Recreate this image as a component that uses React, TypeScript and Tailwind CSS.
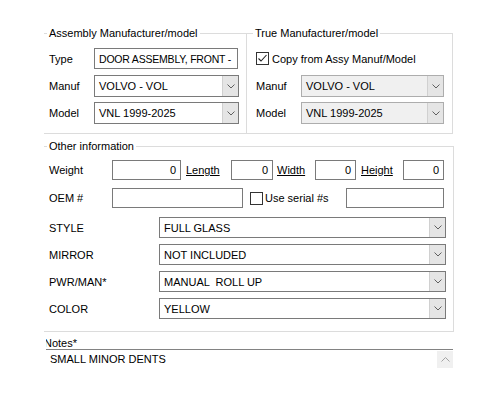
function ChevronDown() {
  return (
    <svg width="8" height="5" viewBox="0 0 8 5" fill="none">
      <path d="M0.5 0.5 L4 4 L7.5 0.5" stroke="#606060" strokeWidth="1" />
    </svg>
  )
}

function ChevronUp() {
  return (
    <svg width="9" height="5" viewBox="0 0 9 5" fill="none">
      <path d="M0.5 4.5 L4.5 0.5 L8.5 4.5" stroke="#a3a3a3" strokeWidth="1" />
    </svg>
  )
}

function Combo({ value, className, disabled }: { value: string; className: string; disabled?: boolean }) {
  return (
    <div className={`flex border ${disabled ? 'bg-[#f0f0f0] border-[#adadad]' : 'bg-white border-[#7a7a7a]'} ${className}`}>
      <div className="flex-1 pl-[4px] flex items-center whitespace-pre overflow-hidden">{value}</div>
      <div className="w-[16px] flex items-center justify-center bg-[#e5e5e5] border-l border-[#d0d0d0]">
        <ChevronDown />
      </div>
    </div>
  )
}

function TextBox({ value = '', className, right }: { value?: string; className: string; right?: boolean }) {
  return (
    <div
      className={`h-[20px] border border-[#7a7a7a] bg-white flex items-center px-[4px] whitespace-nowrap overflow-hidden ${right ? 'justify-end' : ''} ${className}`}
    >
      {value}
    </div>
  )
}

function CheckBox({ checked }: { checked?: boolean }) {
  return (
    <div className="w-[13px] h-[13px] border border-[#333333] bg-white flex items-center justify-center shrink-0">
      {checked && (
        <svg width="11" height="11" viewBox="0 0 11 11" fill="none">
          <path d="M1.5 5.5 L4 8 L9.5 2" stroke="#222222" strokeWidth="1.1" />
        </svg>
      )}
    </div>
  )
}

export default function App() {
  return (
    <div className="w-[500px] h-[400px] bg-white overflow-hidden pt-[26px] font-['Liberation_Sans',Arial,sans-serif] text-[11px] leading-[14px] text-black">
      {/* Manufacturer/model groups */}
      <div className="flex ml-[44px] w-[409px]">
        <fieldset className="w-[202px] border-t border-b border-[#dcdcdc] pl-[5px] pb-[9px]">
          <legend className="-ml-[2px] px-[2px]">Assembly Manufacturer/model</legend>
          <div className="flex items-center h-[21px] mt-[8px]">
            <span className="w-[45px]">Type</span>
            <div className="w-[144px] h-[21px] border border-[#7a7a7a] flex items-center pl-[4px] whitespace-nowrap overflow-hidden text-[10.5px] tracking-[-0.2px]">
              DOOR ASSEMBLY, FRONT -
            </div>
          </div>
          <div className="flex items-center mt-[6px]">
            <span className="w-[45px]">Manuf</span>
            <Combo value="VOLVO - VOL" className="w-[145px] h-[22px]" />
          </div>
          <div className="flex items-center mt-[5px]">
            <span className="w-[45px]">Model</span>
            <Combo value="VNL 1999-2025" className="w-[145px] h-[22px]" />
          </div>
        </fieldset>
        <fieldset className="w-[207px] border border-[#dcdcdc] pl-[9px] pb-[9px]">
          <legend className="-ml-[3px] px-[2px]">True Manufacturer/model</legend>
          <div className="flex items-center h-[21px] mt-[8px] gap-[3px]">
            <CheckBox checked />
            <span>Copy from Assy Manuf/Model</span>
          </div>
          <div className="flex items-center mt-[6px]">
            <span className="w-[45px]">Manuf</span>
            <Combo value="VOLVO - VOL" className="w-[143px] h-[22px]" disabled />
          </div>
          <div className="flex items-center mt-[5px]">
            <span className="w-[45px]">Model</span>
            <Combo value="VNL 1999-2025" className="w-[143px] h-[22px]" disabled />
          </div>
        </fieldset>
      </div>

      {/* Other information */}
      <fieldset className="ml-[44px] mt-[5px] w-[410px] border-t border-r border-b border-[#dcdcdc] pl-[5px] pb-[12px]">
        <legend className="-ml-[2px] px-[2px]">Other information</legend>
        <div className="flex items-center mt-[7px]">
          <span className="w-[63px]">Weight</span>
          <TextBox value="0" right className="w-[69px]" />
          <span className="w-[50px] pl-[5px] underline">Length</span>
          <TextBox value="0" right className="w-[42px]" />
          <span className="w-[42px] pl-[4px] underline">Width</span>
          <TextBox value="0" right className="w-[41px]" />
          <span className="w-[47px] pl-[5px] underline">Height</span>
          <TextBox value="0" right className="w-[41px]" />
        </div>
        <div className="flex items-center mt-[8px]">
          <span className="w-[63px]">OEM #</span>
          <TextBox className="w-[131px]" />
          <div className="ml-[7px]">
            <CheckBox />
          </div>
          <span className="w-[83px] pl-[2px]">Use serial #s</span>
          <TextBox className="w-[98px]" />
        </div>
        {[
          ['STYLE', 'FULL GLASS', 'mt-[9px]'],
          ['MIRROR', 'NOT INCLUDED', 'mt-[6px]'],
          ['PWR/MAN*', 'MANUAL  ROLL UP', 'mt-[6px]'],
          ['COLOR', 'YELLOW', 'mt-[6px]'],
        ].map(([label, value, mt]) => (
          <div key={label} className={`flex items-center ${mt}`}>
            <span className="w-[110px]">{label}</span>
            <Combo value={value} className="w-[287px] h-[21px]" />
          </div>
        ))}
      </fieldset>

      {/* Notes */}
      <div className="ml-[46px] w-[407px] mt-[4px] overflow-hidden">
        <div className="h-[13px] -ml-[2px]">Notes*</div>
        <div className="flex border-t border-[#828282]">
          <div className="flex-1 pl-[4px] pt-[2px]">SMALL MINOR DENTS</div>
          <div className="w-[16px] h-[17px] mt-[1px] bg-[#f0f0f0] flex items-center justify-center">
            <ChevronUp />
          </div>
        </div>
      </div>
    </div>
  )
}
